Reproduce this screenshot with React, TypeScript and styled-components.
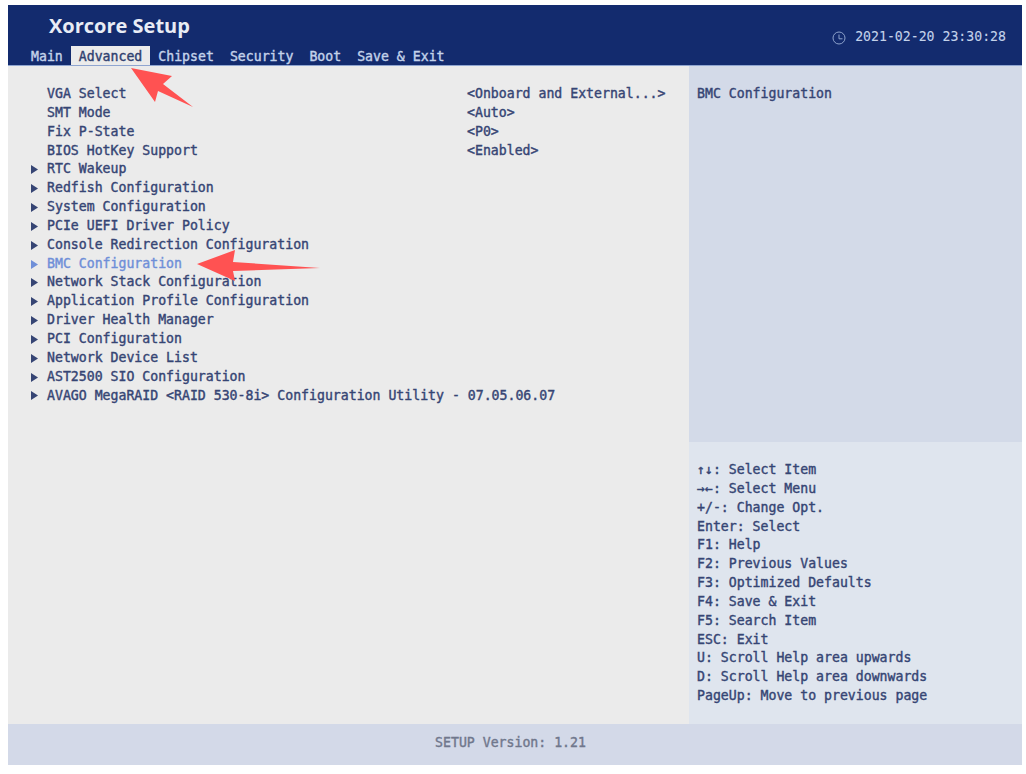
import React from "react";
import styled, { createGlobalStyle } from "styled-components";

const GlobalStyle = createGlobalStyle`
  html, body {
    margin: 0;
    padding: 0;
    background: #fff;
  }
`;

const Page = styled.div`
  position: relative;
  width: 1014px;
  height: 760px;
  margin: 5px 0 0 8px;
  display: flex;
  flex-direction: column;
  font-family: "DejaVu Sans Mono", "Liberation Mono", monospace;
  font-size: 13.2px;
  line-height: 18.85px;
  -webkit-text-stroke: 0.4px currentColor;
  color: #364574;
`;

const Header = styled.header`
  height: 60px;
  background: #132b6e;
  border-bottom: 1px solid #8fa5d0;
  display: flex;
  justify-content: space-between;
`;

const TitleBlock = styled.div`
  display: flex;
  flex-direction: column;
  justify-content: space-between;
`;

const Title = styled.div`
  font-family: "Open Sans", sans-serif;
  font-size: 20px;
  font-weight: 700;
  line-height: 26px;
  color: #e8ecf5;
  padding: 8px 0 0 41px;
  -webkit-text-stroke: 0;
`;

const Tabs = styled.nav`
  display: flex;
  padding-left: 15px;
`;

const Tab = styled.div<{ $active?: boolean }>`
  padding: 0 8px;
  height: 19px;
  line-height: 21px;
  background: ${(p) => (p.$active ? "#ebebeb" : "transparent")};
  color: ${(p) => (p.$active ? "#2f3f70" : "#c3d2ea")};
`;

const Clock = styled.div`
  display: flex;
  align-items: center;
  gap: 9px;
  padding: 23px 16px 0 0;
  height: 19px;
  color: #c3d2ea;
  -webkit-text-stroke: 0.1px currentColor;
`;

const Body = styled.main`
  flex: 1;
  display: flex;
  min-height: 0;
`;

const MenuPane = styled.section`
  flex: 1;
  background: #ebebeb;
  padding: 19px 0 0 23px;
`;

const Row = styled.div<{ $selected?: boolean }>`
  display: grid;
  grid-template-columns: 16px 420px auto;
  height: 18.85px;
  white-space: pre;
  color: ${(p) => (p.$selected ? "#6f8fd8" : "#364574")};
`;

const Caret = styled.span`
  display: flex;
  align-items: center;
  svg {
    display: block;
  }
`;

const Side = styled.aside`
  width: 333px;
  display: flex;
  flex-direction: column;
`;

const HelpTop = styled.div`
  flex: 1;
  background: #d3dae8;
  padding: 19px 8px 0;
`;

const HelpKeys = styled.div`
  height: 282px;
  box-sizing: border-box;
  background: #dfe5ee;
  padding: 19px 8px 0;
`;

const KeyLine = styled.div`
  height: 18.85px;
  white-space: pre;
`;

const Footer = styled.footer`
  height: 41px;
  box-sizing: border-box;
  background: #d3d9e8;
  color: #70778c;
  display: flex;
  align-items: center;
  justify-content: center;
  padding: 0 9px 3px 0;
`;

const Pointer = styled.svg`
  position: absolute;
  left: 0;
  top: 0;
  pointer-events: none;
`;

const items: { name: string; value?: string; sub?: boolean; selected?: boolean }[] = [
  { name: "VGA Select", value: "<Onboard and External...>" },
  { name: "SMT Mode", value: "<Auto>" },
  { name: "Fix P-State", value: "<P0>" },
  { name: "BIOS HotKey Support", value: "<Enabled>" },
  { name: "RTC Wakeup", sub: true },
  { name: "Redfish Configuration", sub: true },
  { name: "System Configuration", sub: true },
  { name: "PCIe UEFI Driver Policy", sub: true },
  { name: "Console Redirection Configuration", sub: true },
  { name: "BMC Configuration", sub: true, selected: true },
  { name: "Network Stack Configuration", sub: true },
  { name: "Application Profile Configuration", sub: true },
  { name: "Driver Health Manager", sub: true },
  { name: "PCI Configuration", sub: true },
  { name: "Network Device List", sub: true },
  { name: "AST2500 SIO Configuration", sub: true },
  { name: "AVAGO MegaRAID <RAID 530-8i> Configuration Utility - 07.05.06.07", sub: true },
];

const keys = [
  "↑↓: Select Item",
  "→←: Select Menu",
  "+/-: Change Opt.",
  "Enter: Select",
  "F1: Help",
  "F2: Previous Values",
  "F3: Optimized Defaults",
  "F4: Save & Exit",
  "F5: Search Item",
  "ESC: Exit",
  "U: Scroll Help area upwards",
  "D: Scroll Help area downwards",
  "PageUp: Move to previous page",
];

const tabs = ["Main", "Advanced", "Chipset", "Security", "Boot", "Save & Exit"];

export default function App() {
  return (
    <>
      <GlobalStyle />
      <Page>
        <Header>
          <TitleBlock>
            <Title>Xorcore Setup</Title>
            <Tabs>
              {tabs.map((t) => (
                <Tab key={t} $active={t === "Advanced"}>
                  {t}
                </Tab>
              ))}
            </Tabs>
          </TitleBlock>
          <Clock>
            <svg width="14" height="14" viewBox="0 0 14 14" fill="none" stroke="#8ea3cc" strokeWidth="1">
              <circle cx="7" cy="7" r="6" />
              <path d="M7 3.5V7.8H10.5" />
            </svg>
            <span>2021-02-20 23:30:28</span>
          </Clock>
        </Header>
        <Body>
          <MenuPane>
            {items.map((it) => (
              <Row key={it.name} $selected={it.selected}>
                <Caret>
                  {it.sub && (
                    <svg width="7" height="9" viewBox="0 0 7 9">
                      <path d="M0 0L7 4.5L0 9Z" fill="currentColor" />
                    </svg>
                  )}
                </Caret>
                <span>{it.name}</span>
                {it.value && <span>{it.value}</span>}
              </Row>
            ))}
          </MenuPane>
          <Side>
            <HelpTop>BMC Configuration</HelpTop>
            <HelpKeys>
              {keys.map((k) => (
                <KeyLine key={k}>{k}</KeyLine>
              ))}
            </HelpKeys>
          </Side>
        </Body>
        <Footer>SETUP Version: 1.21</Footer>
        <Pointer width="340" height="300" viewBox="8 5 340 300">
          <polygon points="131,68 172,76 163,84 193,107 158,91 155,102" fill="#ff5252" />
          <polygon points="197,264 235,250 233,262 320,268 233,271 235,281" fill="#ff5252" />
        </Pointer>
      </Page>
    </>
  );
}
